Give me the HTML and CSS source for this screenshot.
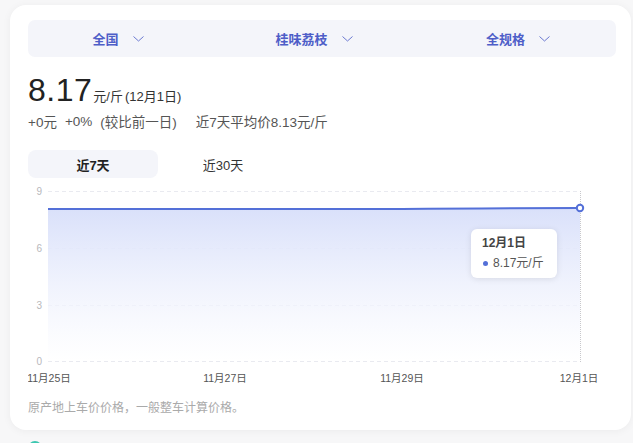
FILE: index.html
```html
<!DOCTYPE html>
<html lang="zh">
<head>
<meta charset="utf-8">
<link rel="stylesheet" href="styles.css">
</head>
<body>
<div class="card">
  <div class="filters">
    <div class="filter"><span>全国</span><svg class="chev" width="11" height="6" viewBox="0 0 11 6"><path d="M0.5 0.5 L5.5 5 L10.5 0.5" fill="none" stroke="#6b79d0" stroke-width="1"/></svg></div>
    <div class="filter"><span>桂味荔枝</span><svg class="chev" width="11" height="6" viewBox="0 0 11 6"><path d="M0.5 0.5 L5.5 5 L10.5 0.5" fill="none" stroke="#6b79d0" stroke-width="1"/></svg></div>
    <div class="filter"><span>全规格</span><svg class="chev" width="11" height="6" viewBox="0 0 11 6"><path d="M0.5 0.5 L5.5 5 L10.5 0.5" fill="none" stroke="#6b79d0" stroke-width="1"/></svg></div>
  </div>
  <div class="price-row">
    <span class="price">8.17</span><span class="unit">元/斤</span><span class="date">(12月1日)</span>
  </div>
  <div class="change-row">
    <span>+0元</span><span>+0%</span><span>(较比前一日)</span><span class="avg">近7天平均价8.13元/斤</span>
  </div>
  <div class="tabs">
    <div class="tab active">近7天</div>
    <div class="tab">近30天</div>
  </div>
  <div class="chart">
    <svg width="588" height="207" viewBox="28 183 588 207">
      <defs>
        <linearGradient id="area" x1="0" y1="0" x2="0" y2="1">
          <stop offset="0" stop-color="#d9e0fa"/>
          <stop offset="1" stop-color="#ffffff" stop-opacity="0.6"/>
        </linearGradient>
      </defs>
      <g stroke="#e9eaf0" stroke-width="1" stroke-dasharray="4 3">
        <line x1="48" y1="190.5" x2="580" y2="190.5"/>
        <line x1="48" y1="247.5" x2="580" y2="247.5"/>
        <line x1="48" y1="304.5" x2="580" y2="304.5"/>
        <line x1="48" y1="360.5" x2="580" y2="360.5"/>
      </g>
      <g class="ylab" text-anchor="end">
        <text x="42" y="194">9</text>
        <text x="42" y="251">6</text>
        <text x="42" y="308">3</text>
        <text x="42" y="364">0</text>
      </g>
      <path d="M48 208 L225 208 L402 208 L580 207 L580 360 L48 360 Z" fill="url(#area)"/>
      <line x1="580.5" y1="190" x2="580.5" y2="361" stroke="#c8c8cc" stroke-width="1" stroke-dasharray="1 1"/>
      <path d="M48 208 L225 208 L402 208 Q480 207 580 207" fill="none" stroke="#5470d8" stroke-width="2"/>
      <circle cx="580" cy="207" r="3.2" fill="#fff" stroke="#5470d8" stroke-width="2"/>
      <g class="xlab" text-anchor="middle">
        <text x="49" y="381">11月25日</text>
        <text x="225" y="381">11月27日</text>
        <text x="402" y="381">11月29日</text>
        <text x="579" y="381">12月1日</text>
      </g>
    </svg>
    <div class="tooltip">
      <div class="tip-date">12月1日</div>
      <div class="tip-val"><span class="dot"></span>8.17元/斤</div>
    </div>
  </div>
  <div class="note">原产地上车价价格，一般整车计算价格。</div>
</div>
<div class="next"><span class="next-icon"></span></div>
</body>
</html>
```
FILE: styles.css
```css
html, body {
  margin: 0;
  padding: 0;
}
body {
  background: #f7f7f8;
  font-family: "Liberation Sans", "Noto Sans CJK SC", sans-serif;
  color: #333;
  overflow: hidden;
  height: 443px;
}
.card {
  margin: 5px 2px 0 10px;
  background: #fff;
  border-radius: 16px;
  box-shadow: 0 1px 8px rgba(0, 0, 0, 0.05);
  padding: 15px 15px 13px 18px;
}
.filters {
  display: grid;
  grid-template-columns: 180px 212px 1fr;
  height: 37px;
  background: #f4f5fa;
  border-radius: 7px;
}
.filter {
  display: flex;
  align-items: center;
  justify-content: center;
  gap: 14px;
  font-size: 13px;
  font-weight: bold;
  color: #4e5ec8;
}
.chev {
  display: block;
}
.price-row {
  margin-top: 15px;
  display: flex;
  align-items: baseline;
  height: 36px;
}
.price {
  font-size: 32px;
  color: #222;
  letter-spacing: 0.5px;
}
.unit {
  font-size: 13px;
  color: #333;
  margin-left: 1px;
}
.date {
  font-size: 13px;
  color: #333;
  margin-left: 2px;
}
.change-row {
  margin-top: 3px;
  display: flex;
  gap: 8px;
  font-size: 13.5px;
  color: #555;
  height: 20px;
  align-items: center;
}
.change-row .avg {
  margin-left: 11px;
}
.tabs {
  margin-top: 19px;
  display: flex;
  height: 28px;
}
.tab {
  width: 130px;
  display: flex;
  align-items: center;
  justify-content: center;
  font-size: 13px;
  color: #333;
  border-radius: 8px;
}
.tab.active {
  background: #f4f5fa;
  font-weight: bold;
  color: #222;
}
.chart {
  position: relative;
  margin-top: 6px;
  height: 207px;
}
.chart svg {
  display: block;
}
.ylab text {
  font-size: 10px;
  fill: #b8b8bc;
}
.xlab text {
  font-size: 10.5px;
  fill: #555;
}
.tooltip {
  position: absolute;
  left: 443px;
  top: 45px;
  width: 86px;
  height: 49px;
  box-sizing: border-box;
  background: #fff;
  border-radius: 6px;
  box-shadow: 0 1px 6px rgba(0, 0, 0, 0.1);
  padding: 6px 0 0 11px;
}
.tip-date {
  font-size: 12px;
  font-weight: bold;
  color: #444;
  line-height: 16px;
}
.tip-val {
  margin-top: 4px;
  font-size: 12px;
  color: #555;
  line-height: 16px;
  display: flex;
  align-items: center;
}
.dot {
  width: 5px;
  height: 5px;
  border-radius: 50%;
  background: #5470d8;
  margin: 0 5px 0 1px;
}
.note {
  margin-top: 8px;
  font-size: 12px;
  color: #aaa;
  line-height: 18px;
}
.next {
  padding: 11px 0 0 28px;
}
.next-icon {
  display: block;
  width: 14px;
  height: 14px;
  border-radius: 50%;
  border: 2px solid #3cc7b0;
  box-sizing: border-box;
}
```
